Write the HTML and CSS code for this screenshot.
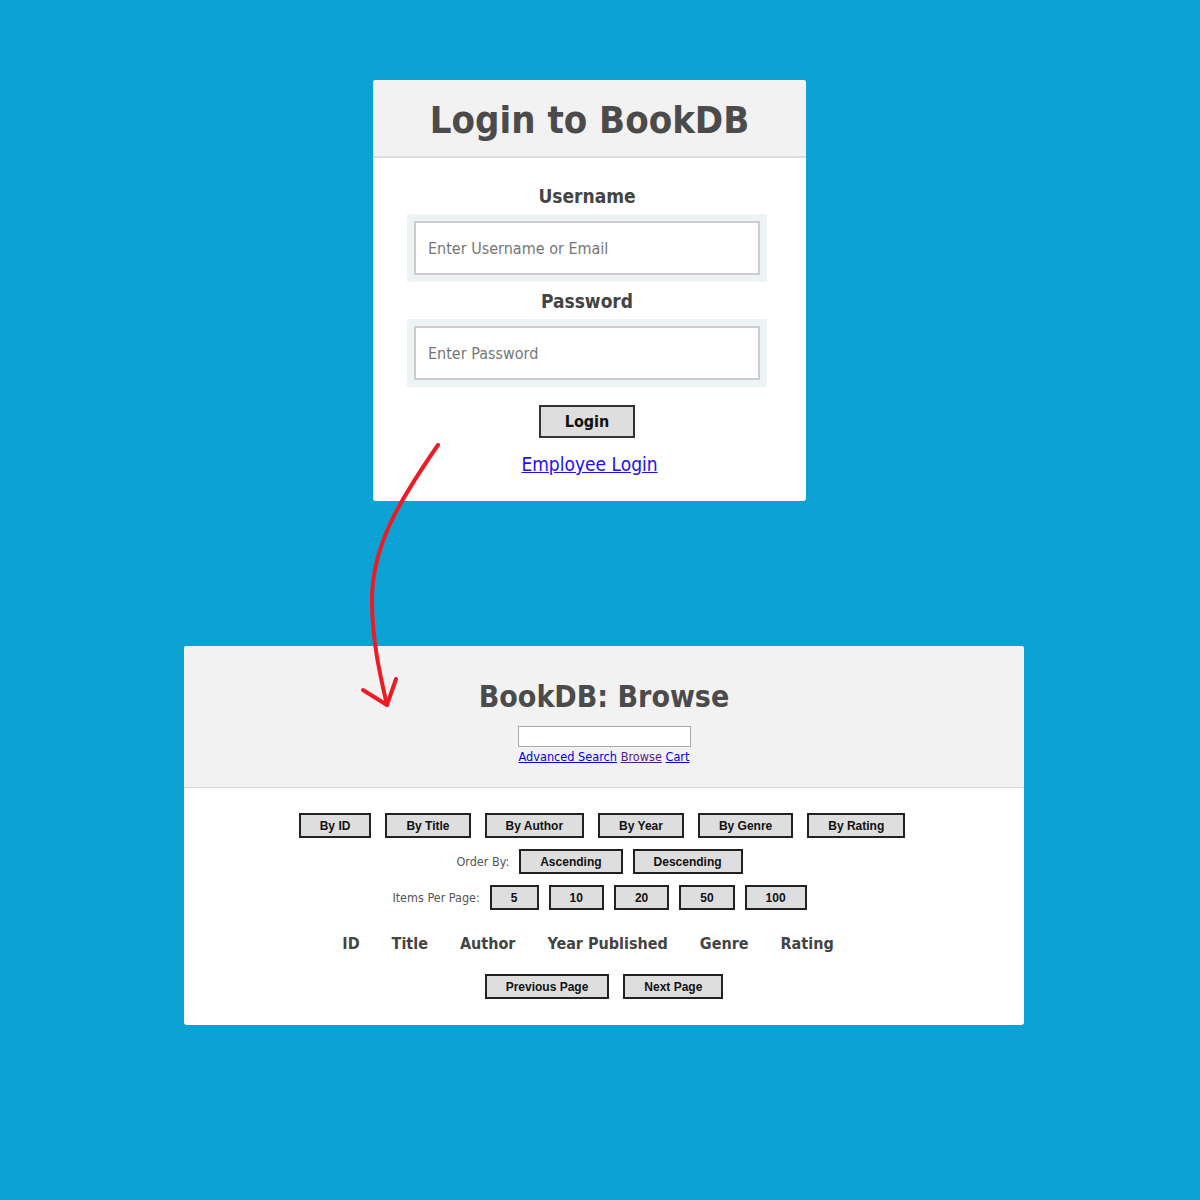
FILE: index.html
```html
<!DOCTYPE html>
<html>
<head>
<meta charset="utf-8">
<title>BookDB</title>
<link rel="stylesheet" href="styles.css">
</head>
<body>
<div class="page">
  <div class="card login-card">
    <div class="login-head"><h1 class="login-title">Login to BookDB</h1></div>
    <form class="login-body">
      <label class="field-label">Username</label>
      <div class="field-wrap"><input class="field-input" type="text" placeholder="Enter Username or Email"></div>
      <label class="field-label field-label-2">Password</label>
      <div class="field-wrap"><input class="field-input" type="password" placeholder="Enter Password"></div>
      <button class="login-btn" type="button">Login</button>
      <a class="employee-link" href="#">Employee Login</a>
    </form>
  </div>

  <div class="card browse-card">
    <div class="browse-head">
      <h1 class="browse-title">BookDB: Browse</h1>
      <input class="search-input" type="text">
      <div class="nav-links"><a href="#" class="nav-link">Advanced Search</a> <a href="#" class="nav-link visited">Browse</a> <a href="#" class="nav-link">Cart</a></div>
    </div>
    <div class="browse-body">
      <div class="btn-row sort-row">
        <button class="gbtn">By ID</button>
        <button class="gbtn">By Title</button>
        <button class="gbtn">By Author</button>
        <button class="gbtn">By Year</button>
        <button class="gbtn">By Genre</button>
        <button class="gbtn">By Rating</button>
      </div>
      <div class="btn-row opt-row">
        <span class="row-label">Order By:</span>
        <button class="gbtn">Ascending</button>
        <button class="gbtn">Descending</button>
      </div>
      <div class="btn-row opt-row">
        <span class="row-label">Items Per Page:</span>
        <button class="gbtn">5</button>
        <button class="gbtn">10</button>
        <button class="gbtn">20</button>
        <button class="gbtn">50</button>
        <button class="gbtn">100</button>
      </div>
      <table class="book-table">
        <thead>
          <tr><th>ID</th><th>Title</th><th>Author</th><th>Year Published</th><th>Genre</th><th>Rating</th></tr>
        </thead>
      </table>
      <div class="btn-row page-row">
        <button class="gbtn">Previous Page</button>
        <button class="gbtn">Next Page</button>
      </div>
    </div>
  </div>
</div>
<svg class="arrow" width="1200" height="1200" viewBox="0 0 1200 1200">
  <path d="M438,445 C400,500 372,545 372,600 C372,640 380,675 387,705" fill="none" stroke="#ec1c24" stroke-width="4" stroke-linecap="round"/>
  <path d="M363,690 L387,705 L396,679" fill="none" stroke="#ec1c24" stroke-width="4" stroke-linecap="round" stroke-linejoin="round"/>
</svg>
</body>
</html>
```

FILE: styles.css
```css
html, body {
  margin: 0;
  padding: 0;
}
body {
  background: #0da2d4;
  min-height: 1200px;
  position: relative;
  font-family: "DejaVu Sans Condensed", "DejaVu Sans", sans-serif;
}
.page {
  display: flex;
  flex-direction: column;
  align-items: flex-start;
  padding-top: 80px;
}
.card {
  background: #fff;
  border-radius: 3px;
  overflow: hidden;
}
.login-card {
  width: 433px;
  margin-left: 373px;
}
.login-head {
  background: #f2f2f2;
  height: 76px;
  border-bottom: 2px solid #dcdcdc;
  display: flex;
  align-items: center;
  justify-content: center;
}
.login-title {
  margin: 0;
  font-size: 38px;
  font-weight: bold;
  color: #4b4b4b;
  line-height: 44px;
  padding-top: 3px;
}
.login-body {
  display: flex;
  flex-direction: column;
  align-items: center;
  padding: 27px 5px 26px 0;
  margin: 0;
}
.field-label {
  font-size: 19px;
  font-weight: bold;
  color: #444;
  line-height: 22px;
  margin-bottom: 7px;
}
.field-label-2 {
  margin-top: 8px;
}
.field-wrap {
  width: 346px;
  padding: 7px;
  background: #eef3f6;
}
.field-input {
  display: block;
  box-sizing: border-box;
  width: 346px;
  height: 54px;
  border: 2px solid #cdcdcd;
  padding: 0 12px;
  font-family: "DejaVu Sans Condensed", "DejaVu Sans", sans-serif;
  font-size: 16px;
  color: #333;
  background: #fff;
  outline: none;
}
.field-input::placeholder {
  color: #767676;
}
.login-btn {
  margin-top: 18px;
  width: 96px;
  height: 33px;
  background: #dedede;
  border: 2px solid #333;
  font-family: "DejaVu Sans Condensed", "DejaVu Sans", sans-serif;
  font-weight: bold;
  font-size: 16px;
  color: #111;
  padding: 0;
}
.employee-link {
  margin-top: 15px;
  margin-left: 5px;
  font-size: 19px;
  line-height: 22px;
  color: #2211ee;
}

.browse-card {
  width: 840px;
  margin-left: 184px;
  margin-top: 145px;
}
.browse-head {
  background: #f2f2f2;
  border-bottom: 1px solid #d4d4d4;
  padding: 33px 0 22px;
  display: flex;
  flex-direction: column;
  align-items: center;
}
.browse-title {
  margin: 0;
  font-size: 30px;
  line-height: 36px;
  color: #4b4b4b;
  font-weight: bold;
}
.search-input {
  margin-top: 11px;
  box-sizing: border-box;
  width: 173px;
  height: 21px;
  border: 1px solid #a9a9a9;
  background: #fff;
  padding: 0;
  margin-left: 1px;
}
.nav-links {
  font-size: 12.6px;
  line-height: 16px;
  margin-top: 2px;
}
.nav-link {
  color: #0000ee;
}
.nav-link.visited {
  color: #551a8b;
}
.browse-body {
  padding: 25px 0 26px;
  display: flex;
  flex-direction: column;
  align-items: center;
}
.btn-row {
  display: flex;
  align-items: center;
  justify-content: center;
  gap: 10px;
  width: 100%;
  box-sizing: border-box;
}
.sort-row {
  gap: 14px;
  padding-right: 4px;
}
.opt-row {
  margin-top: 11px;
  padding-right: 9px;
}
.gbtn {
  height: 25px;
  padding: 0 19px;
  background: #dedede;
  border: 2px solid #222;
  font-family: "Liberation Sans", Arial, sans-serif;
  font-weight: bold;
  font-size: 12px;
  color: #111;
}
.row-label {
  font-size: 12.5px;
  color: #555;
}
.book-table {
  margin-top: 23px;
  border-collapse: collapse;
}
.book-table th {
  padding: 0 32px 0 0;
  font-size: 16px;
  line-height: 22px;
  color: #444;
  font-weight: bold;
  text-align: left;
}
.page-row {
  margin-top: 19px;
  gap: 14px;
}
.arrow {
  position: absolute;
  left: 0;
  top: 0;
  pointer-events: none;
}
```
